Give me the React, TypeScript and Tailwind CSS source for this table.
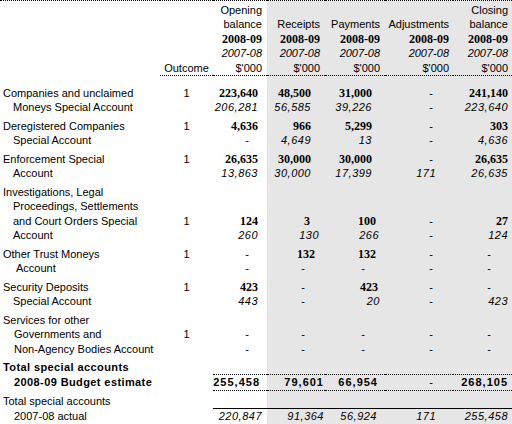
import React from "react";

type Kind = "b" | "i" | "t";

type Line = {
  label: string;
  indent?: string;
  boldLabel?: boolean;
  outcome?: string;
  vals?: string[];
  pr?: (string | undefined)[];
  kind?: Kind;
  first?: boolean;
  border?: "budget" | "actual";
};

const lines: Line[] = [
  { label: "Companies and unclaimed", outcome: "1", vals: ["223,640", "48,500", "31,000", "-", "241,140"], kind: "b", first: true },
  { label: "Moneys Special Account", indent: "pl-[13px]", vals: ["206,281", "56,585", "39,226", "-", "223,640"], kind: "i" },
  { label: "Deregistered Companies", outcome: "1", vals: ["4,636", "966", "5,299", "-", "303"], kind: "b", first: true },
  { label: "Special Account", indent: "pl-[13px]", vals: ["-", "4,649", "13", "-", "4,636"], kind: "i" },
  { label: "Enforcement Special", outcome: "1", vals: ["26,635", "30,000", "30,000", "-", "26,635"], kind: "b", first: true },
  { label: "Account", indent: "pl-[13px]", vals: ["13,863", "30,000", "17,399", "171", "26,635"], kind: "i" },
  { label: "Investigations, Legal", first: true },
  { label: "Proceedings, Settlements", indent: "pl-[13px]" },
  {
    label: "and Court Orders Special",
    indent: "pl-[13px]",
    outcome: "1",
    vals: ["124", "3", "100", "-", "27"],
    pr: [undefined, "pr-[15px]", "pr-[9px]"],
    kind: "b",
  },
  {
    label: "Account",
    indent: "pl-[13px]",
    vals: ["260", "130", "266", "-", "124"],
    pr: [undefined, "pr-[6px]", "pr-[6px]"],
    kind: "i",
  },
  {
    label: "Other Trust Moneys",
    outcome: "1",
    vals: ["-", "132", "132", "-", "-"],
    pr: [undefined, "pr-[10px]", "pr-[9px]"],
    kind: "b",
    first: true,
  },
  { label: "Account", indent: "pl-[16px]", vals: ["-", "-", "-", "-", "-"], kind: "i" },
  {
    label: "Security Deposits",
    outcome: "1",
    vals: ["423", "-", "423", "-", "-"],
    pr: [undefined, undefined, "pr-[7px]"],
    kind: "b",
    first: true,
  },
  {
    label: "Special Account",
    indent: "pl-[13px]",
    vals: ["443", "-", "20", "-", "423"],
    pr: [undefined, undefined, "pr-[5px]"],
    kind: "i",
  },
  { label: "Services for other", first: true },
  { label: "Governments and", indent: "pl-[14px]", outcome: "1", vals: ["-", "-", "-", "-", "-"], kind: "b" },
  { label: "Non-Agency Bodies Account", indent: "pl-[14px]", vals: ["-", "-", "-", "-", "-"], kind: "i" },
  { label: "Total special accounts", boldLabel: true, first: true },
  {
    label: "2008-09 Budget estimate",
    boldLabel: true,
    indent: "pl-[14px]",
    vals: ["255,458", "79,601", "66,954", "-", "268,105"],
    pr: ["pr-[7px]", "pr-[1px]", "pr-[7px]"],
    kind: "t",
    border: "budget",
  },
  { label: "Total special accounts", first: true },
  {
    label: "2007-08 actual",
    indent: "pl-[14px]",
    vals: ["220,847", "91,364", "56,924", "171", "255,458"],
    pr: ["pr-[5px]", "pr-[1px]", "pr-[8px]"],
    kind: "i",
    border: "actual",
  },
];

// right padding of numbers, dashes and headings per column
const numPr = ["pr-[9px]", "pr-[14px]", "pr-[13px]", "pr-[17px]", "pr-[4px]"];
const dashPr = ["pr-[18px]", "pr-[20px]", "pr-[20px]", "pr-[20px]", "pr-[21px]"];
const headPr = ["pr-[5px]", "pr-[5px]", "pr-[5px]", "pr-[4px]", "pr-[4px]"];

const kindCls: Record<Kind, string> = {
  b: "font-['Liberation_Serif',serif] font-bold text-[12px]",
  i: "italic tracking-[0.5px]",
  t: "font-bold tracking-[1px]",
};

const grey = "bg-[#e6e6e6]";

function HeadRow({ cells, last }: { cells: string[]; last?: boolean }) {
  // cells: outcome, opening, receipts, payments, adjustments, closing
  const dot = last ? "border-b border-dotted border-black" : "";
  return (
    <tr className="h-[14.5px] leading-[14.5px]">
      <td />
      <td className={`text-center ${dot}`}>{cells[0]}</td>
      {cells.slice(1).map((c, i) => (
        <td key={i} className={`text-right whitespace-nowrap ${headPr[i]} ${i > 0 ? grey : ""} ${dot}`}>
          {c}
        </td>
      ))}
    </tr>
  );
}

function HeadYears({ kind }: { kind: "b" | "i" }) {
  const cls = kind === "b" ? kindCls.b : "italic";
  return (
    <tr className="h-[14.5px] leading-[14.5px]">
      <td />
      <td />
      {[0, 1, 2, 3, 4].map((i) => (
        <td key={i} className={`text-right ${headPr[i]} ${i > 0 ? grey : ""} ${cls}`}>
          {kind === "b" ? "2008-09" : "2007-08"}
        </td>
      ))}
    </tr>
  );
}

export default function App() {
  return (
    <div className="w-[512px] h-[424px] bg-white overflow-hidden font-['Liberation_Sans',Arial,sans-serif] text-[11px] text-black">
      <table className="w-[512px] table-fixed border-t border-dotted border-black">
        <colgroup>
          <col className="w-[160px]" />
          <col className="w-[53px]" />
          <col className="w-[54px]" />
          <col className="w-[58px]" />
          <col className="w-[60px]" />
          <col className="w-[68px]" />
          <col className="w-[59px]" />
        </colgroup>
        <tbody>
          <tr className="h-[2px]">
            <td colSpan={3} />
            <td colSpan={4} className={grey} />
          </tr>
          <HeadRow cells={["", "Opening", "", "", "", "Closing"]} />
          <HeadRow cells={["", "balance", "Receipts", "Payments", "Adjustments", "balance"]} />
          <HeadYears kind="b" />
          <HeadYears kind="i" />
          <HeadRow cells={["Outcome", "$'000", "$'000", "$'000", "$'000", "$'000"]} last />
          <tr className="h-[6px]">
            <td colSpan={3} />
            <td colSpan={4} className={grey} />
          </tr>
          {lines.map((l, r) => {
            const pad = l.first ? "pt-[4px]" : "";
            const isLast = r === lines.length - 1;
            const bottom = isLast ? "border-b border-dotted border-black" : "";
            const numBorder =
              l.border === "budget"
                ? "border-y border-dotted border-black"
                : l.border === "actual"
                ? "border-t border-solid border-black"
                : "";
            return (
              <tr key={r} className="leading-[14.5px]">
                <td
                  className={`${pad} ${bottom} ${l.indent ?? "pl-[3px]"} whitespace-nowrap ${
                    l.boldLabel ? "font-bold tracking-[0.4px]" : ""
                  }`}
                >
                  {l.label}
                </td>
                <td className={`${pad} ${bottom} text-center`}>{l.outcome}</td>
                {[0, 1, 2, 3, 4].map((i) => {
                  const v = l.vals?.[i];
                  const dash = v === "-";
                  const pr = dash ? dashPr[i] : l.pr?.[i] ?? numPr[i];
                  return (
                    <td
                      key={i}
                      className={`${pad} ${bottom} ${numBorder} text-right whitespace-nowrap ${i > 0 ? grey : ""} ${pr} ${
                        l.kind && !dash ? kindCls[l.kind] : ""
                      }`}
                    >
                      {v}
                    </td>
                  );
                })}
              </tr>
            );
          })}
        </tbody>
      </table>
    </div>
  );
}
